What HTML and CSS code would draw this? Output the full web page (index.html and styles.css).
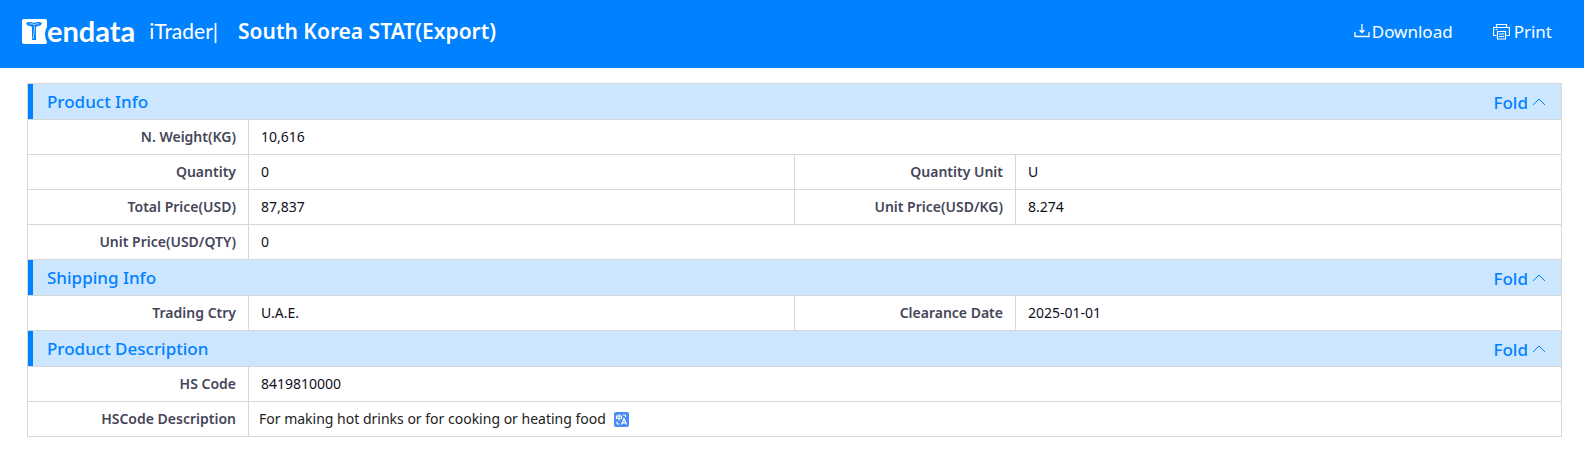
FILE: index.html
```
<!DOCTYPE html>
<html lang="en">
<head>
    <meta charset="UTF-8">
    <meta name="viewport" content="width=device-width, initial-scale=1.0">
    <title>South Korea STAT(Export)</title>
    <link rel="stylesheet" href="styles.css">
</head>
<body>
    <header class="header">
        <div class="brand">
            <div class="logo">
                <svg class="logo-mark" viewBox="0 0 25 25" aria-hidden="true">
                    <path fill="#fff" d="M2 0h21q2 0 2 2v6q-2 3-2 7t2 8q0 2-2 2H2q-2 0-2-2V2Q0 0 2 0z"/>
                    <path fill="#0081ff" d="M4 4q4-2 8 0q4-2 8 0q-1 3-4 3q-2 0-2 2v12h-4V9q0-2-2-2q-3 0-4-3z"/>
                    <path fill="none" stroke="#fff" stroke-width=".7" d="M7 5q4-1 5 1q2-2 5-1M12.500 7q0 7-1.500 13"/>
                </svg>
                <span class="logo-text">endata</span>
            </div>
            <span class="product">iTrader|</span>
        </div>
        <h1>South Korea STAT(Export)</h1>
        <div class="actions">
            <button type="button" class="btn-action">
                <svg width="16" height="16" viewBox="0 0 16 16" fill="none" stroke="currentColor" stroke-width="1.300" aria-hidden="true">
                    <path d="M8 1v8M5.500 7l2.500 2.500L10.500 7M1 9v4.500h14V9"/>
                </svg>
                Download
            </button>
            <button type="button" class="btn-action btn-print">
                <svg width="17" height="17" viewBox="0 0 17 17" fill="none" stroke="currentColor" stroke-width="1.200" aria-hidden="true">
                    <path d="M3.500 4.500v-3h10v3M3.500 12.500h-3v-8h16v8h-3M4.500 8.500h8v7.500h-8zM6 11h5M6 13.500h5M2.500 6.500h2"/>
                </svg>
                Print
            </button>
        </div>
    </header>

    <main class="container">
        <table class="info-table">
            <colgroup>
                <col class="col-label">
                <col class="col-value">
                <col class="col-label">
                <col class="col-value">
            </colgroup>
            <tbody>
                <tr>
                    <td colspan="4" class="section">
                        <div class="section-bar">
                            <h2>Product Info</h2>
                            <button type="button" class="btn-fold">Fold
                                <svg width="14" height="14" viewBox="0 0 14 14" fill="none" stroke="currentColor" aria-hidden="true"><path d="M1 10l6-6 6 6"/></svg>
                            </button>
                        </div>
                    </td>
                </tr>
                <tr>
                    <th scope="row">N. Weight(KG)</th>
                    <td colspan="3">10,616</td>
                </tr>
                <tr>
                    <th scope="row">Quantity</th>
                    <td>0</td>
                    <th scope="row">Quantity Unit</th>
                    <td>U</td>
                </tr>
                <tr>
                    <th scope="row">Total Price(USD)</th>
                    <td>87,837</td>
                    <th scope="row">Unit Price(USD/KG)</th>
                    <td>8.274</td>
                </tr>
                <tr>
                    <th scope="row">Unit Price(USD/QTY)</th>
                    <td colspan="3">0</td>
                </tr>
            </tbody>
            <tbody>
                <tr>
                    <td colspan="4" class="section">
                        <div class="section-bar">
                            <h2>Shipping Info</h2>
                            <button type="button" class="btn-fold">Fold
                                <svg width="14" height="14" viewBox="0 0 14 14" fill="none" stroke="currentColor" aria-hidden="true"><path d="M1 10l6-6 6 6"/></svg>
                            </button>
                        </div>
                    </td>
                </tr>
                <tr>
                    <th scope="row">Trading Ctry</th>
                    <td>U.A.E.</td>
                    <th scope="row">Clearance Date</th>
                    <td>2025-01-01</td>
                </tr>
            </tbody>
            <tbody>
                <tr>
                    <td colspan="4" class="section">
                        <div class="section-bar">
                            <h2>Product Description</h2>
                            <button type="button" class="btn-fold">Fold
                                <svg width="14" height="14" viewBox="0 0 14 14" fill="none" stroke="currentColor" aria-hidden="true"><path d="M1 10l6-6 6 6"/></svg>
                            </button>
                        </div>
                    </td>
                </tr>
                <tr>
                    <th scope="row">HS Code</th>
                    <td colspan="3">8419810000</td>
                </tr>
                <tr>
                    <th scope="row">HSCode Description</th>
                    <td colspan="3" class="description">
                        <div class="description-text">
                            <span>For making hot drinks or for cooking or heating food</span>
                            <button type="button" class="btn-translate" aria-label="Translate">
                                <svg width="15" height="15" viewBox="0 0 15 15" fill="none" stroke="#fff" aria-hidden="true">
                                    <rect width="15" height="15" rx="2" fill="#4a8cf7" stroke="none"/>
                                    <path stroke-width="1.200" d="M2.500 4h5v2.500h-5zM5 2.200v6.300M7.500 12.500L10 6.500l2.500 6M8.500 10.800h3"/>
                                    <path stroke-width="1" d="M9 3h2.500v2M3 9.500V12h2.500"/>
                                </svg>
                            </button>
                        </div>
                    </td>
                </tr>
            </tbody>
        </table>
    </main>
</body>
</html>
```
FILE: styles.css
```
* {
    margin: 0;
    padding: 0;
    box-sizing: border-box;
}

body {
    font-family: 'Segoe UI', 'Noto Sans', sans-serif;
    font-size: 14px;
    background: #fff;
    color: #10101c;
}

button {
    border: none;
    background: none;
    font-family: inherit;
    cursor: pointer;
}

.header {
    display: flex;
    align-items: center;
    height: 68px;
    padding: 0 32px 6px 22px;
    background: #0081ff;
    color: #fff;
}

.brand {
    display: flex;
    align-items: center;
    gap: 14px;
}

.logo {
    display: flex;
    align-items: center;
}

.logo-mark {
    width: 25px;
    height: 25px;
}

.logo-text {
    font-family: Lato, sans-serif;
    font-size: 29px;
    font-weight: 700;
    line-height: 28px;
}

.product {
    font-family: Lato, sans-serif;
    font-size: 21px;
    line-height: 28px;
}

.header h1 {
    margin-left: 20px;
    font-size: 21px;
    font-weight: 600;
}

.actions {
    display: flex;
    gap: 40px;
    margin-left: auto;
}

.btn-action {
    display: flex;
    align-items: center;
    gap: 2px;
    font-size: 17px;
    color: #fff;
}

.btn-print {
    gap: 4px;
}

.container {
    padding: 15px 22px 20px 27px;
}

.info-table {
    width: 100%;
    table-layout: fixed;
    border-collapse: collapse;
}

.col-label {
    width: 221px;
}

.info-table th,
.info-table td {
    border: 1px solid #d7d7d7;
    padding: 0 12px;
    line-height: 34px;
    text-align: left;
}

.info-table th {
    font-weight: 600;
    text-align: right;
    color: #45465a;
}

.info-table .section {
    padding: 0;
}

.section-bar {
    display: flex;
    justify-content: space-between;
    align-items: center;
    height: 35px;
    padding: 1px 15px 0 14px;
    border-left: 5px solid #0081ff;
    background: #cce6ff;
    color: #0081ff;
}

.section-bar h2 {
    font-size: 17px;
    font-weight: 500;
}

.btn-fold {
    display: flex;
    align-items: center;
    gap: 4px;
    font-size: 17px;
    font-weight: 500;
    color: #0081ff;
}

.info-table .description {
    padding: 0 10px;
}

.description-text {
    display: flex;
    align-items: center;
    gap: 8px;
    color: #222;
}

.btn-translate {
    display: flex;
}
```
